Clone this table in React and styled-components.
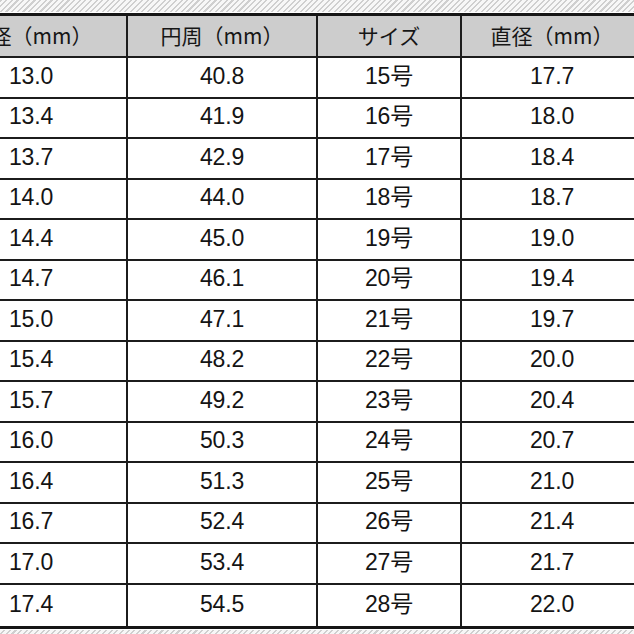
import React from "react";
import styled, { createGlobalStyle } from "styled-components";

const GlobalStyle = createGlobalStyle`
  html, body {
    margin: 0;
    padding: 0;
    width: 634px;
    height: 634px;
    overflow: hidden;
    background: repeating-linear-gradient(135deg, #cfcfcf 0 1.5px, #f7f7f7 1.5px 4px);
  }
`;

const Frame = styled.div`
  width: 634px;
  height: 634px;
  overflow: hidden;
  padding-top: 12px;
  box-sizing: border-box;
`;

const Sheet = styled.div`
  width: 708px;
  margin-left: -64px;
  background: #fff;
  border-top: 1px solid #fff;
  box-shadow: 0 1px 0 #fff;
`;

const Table = styled.div`
  border-top: 3px solid #161616;
  border-bottom: 3px solid #161616;
  font-family: "Liberation Sans", "Noto Sans CJK JP", sans-serif;
  color: #141414;
`;

const Row = styled.div`
  display: grid;
  grid-template-columns: 192px 190px 144px 182px;
  height: ${(p) => p.$h}px;
  box-sizing: border-box;
  border-bottom: ${(p) => (p.$last ? "none" : "2px solid #1c1c1c")};
  background: ${(p) => (p.$head ? "#cdcdcd" : "#fff")};
`;

const Cell = styled.div`
  display: flex;
  align-items: center;
  justify-content: center;
  border-right: 2px solid #1c1c1c;
  font-size: 23px;
  line-height: 24px;
  padding-bottom: 3px;
  box-sizing: border-box;
  letter-spacing: -0.2px;
`;

const HeadCell = styled(Cell)`
  font-family: "Noto Sans CJK JP", sans-serif;
  font-size: 21px;
  color: #161616;
  padding-bottom: 2px;
  letter-spacing: 0;
`;

const rows = [
  ["13.0", "40.8", "15号", "17.7"],
  ["13.4", "41.9", "16号", "18.0"],
  ["13.7", "42.9", "17号", "18.4"],
  ["14.0", "44.0", "18号", "18.7"],
  ["14.4", "45.0", "19号", "19.0"],
  ["14.7", "46.1", "20号", "19.4"],
  ["15.0", "47.1", "21号", "19.7"],
  ["15.4", "48.2", "22号", "20.0"],
  ["15.7", "49.2", "23号", "20.4"],
  ["16.0", "50.3", "24号", "20.7"],
  ["16.4", "51.3", "25号", "21.0"],
  ["16.7", "52.4", "26号", "21.4"],
  ["17.0", "53.4", "27号", "21.7"],
  ["17.4", "54.5", "28号", "22.0"],
];

const heads = ["直径（mm）", "円周（mm）", "サイズ", "直径（mm）"];

export default function App() {
  return (
    <>
      <GlobalStyle />
      <Frame>
        <Sheet>
          <Table>
            <Row $head $h={42}>
              {heads.map((h, i) => (
                <HeadCell key={i}>{h}</HeadCell>
              ))}
            </Row>
            {rows.map((r, i) => {
              const last = i === rows.length - 1;
              return (
                <Row key={i} $h={last ? 41.5 : 40.5} $last={last}>
                  {r.map((v, j) => (
                    <Cell key={j}>{v}</Cell>
                  ))}
                </Row>
              );
            })}
          </Table>
        </Sheet>
      </Frame>
    </>
  );
}
